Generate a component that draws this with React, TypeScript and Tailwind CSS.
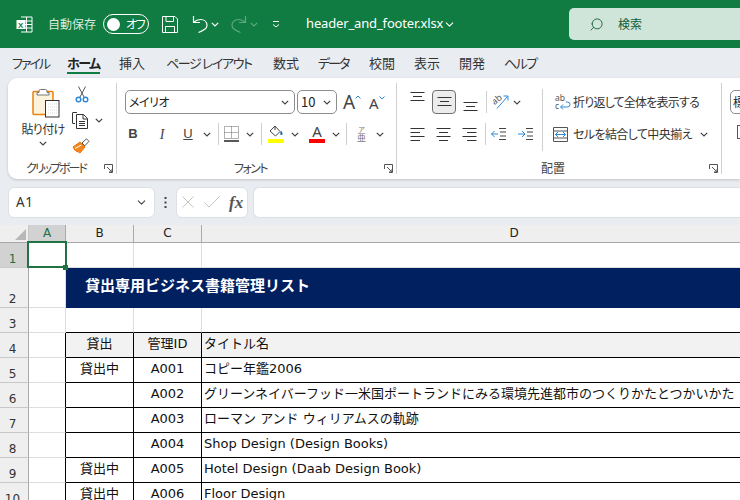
import type { ReactNode } from 'react'
import { ChevronDown, Search } from 'lucide-react'

const uiFont = "[font-family:'Noto_Sans_CJK_JP','Noto_Sans',sans-serif] [font-feature-settings:'palt']"

function Chev({ className = 'text-[#444]' }: { className?: string }) {
  return (
    <svg width="8" height="5" viewBox="0 0 8 5" className={className}>
      <path d="M0.8 0.8 4 4 7.2 0.8" fill="none" stroke="currentColor" strokeWidth="1.2" />
    </svg>
  )
}

function Launcher() {
  return (
    <svg width="9" height="9" viewBox="0 0 9 9" className="text-[#555]">
      <path d="M0.5 5V0.5H8.5V8.5H5M3 3 8 8M8 5V8H5" fill="none" stroke="currentColor" />
    </svg>
  )
}

function Sep({ className = 'h-[22px]' }: { className?: string }) {
  return <div className={`w-px flex-none bg-[#cfcfcf] ${className}`} />
}

function AlignLines({ kind }: { kind: 'left' | 'center' | 'right' }) {
  const rows = [1.5, 5.5, 9.5, 13.5]
  const short = kind === 'left' ? 'M0.5 Y H10' : kind === 'center' ? 'M3 Y H12' : 'M5 Y H14.5'
  return (
    <svg width="15" height="15" viewBox="0 0 15 15" className="flex-none text-[#333]">
      {rows.map((y, i) => (
        <path key={y} d={i % 2 ? short.replace('Y', String(y)) : `M0.5 ${y}H14.5`} stroke="currentColor" fill="none" />
      ))}
    </svg>
  )
}

function VAlign({ rows }: { rows: number[] }) {
  return (
    <svg width="15" height="16" viewBox="0 0 15 16" className="flex-none text-[#333]">
      {rows.map((y, i) => (
        <path key={y} d={i === 1 ? `M3 ${y}H12` : `M0.5 ${y}H14.5`} stroke="currentColor" fill="none" />
      ))}
    </svg>
  )
}

function RibbonGroup({ width, label, labelClass = '', children }: { width: string; label: string; labelClass?: string; children: ReactNode }) {
  return (
    <div className={`${width} my-[5px] flex flex-none flex-col border-r border-[#d0d0d0]`}>
      <div className="min-h-0 flex-1">{children}</div>
      <div className="-mb-[2px] flex h-[16px] items-center">
        <div className={`flex-1 text-center text-[12px] leading-none text-[#444] ${uiFont} ${labelClass}`}>{label}</div>
        <div className="flex w-[12px] flex-none justify-start"><Launcher /></div>
      </div>
    </div>
  )
}

function Clipboard() {
  return (
    <div className="flex">
      <div className="flex w-[58px] flex-none flex-col items-center pl-[12px] pt-[5px]">
        <svg width="28" height="30" viewBox="0 0 28 30" className="ml-[5px] flex-none">
          <rect x="1" y="3.5" width="20" height="23" rx="1" fill="#fdf3dd" stroke="#e8820c" strokeWidth="1.5" />
          <path d="M7 4.5V3a1.5 1.5 0 0 1 1.5-1.5h5A1.5 1.5 0 0 1 15 3v1.5h2v2.5H5V4.5z" fill="#fff" stroke="#777" />
          <rect x="13.5" y="12.5" width="13.5" height="16.5" fill="#fff" stroke="#333" />
          <path d="M16 16h9M16 19h9M16 22h9M16 25h9" stroke="#ddd" strokeDasharray="1 1" />
        </svg>
        <div className={`mt-[3px] whitespace-nowrap text-[12px] leading-[16px] tracking-[-0.7px] text-[#333] ${uiFont}`}>貼り付け</div>
        <div className="mt-[4px] flex justify-center"><Chev /></div>
      </div>
      <div className="flex flex-col pl-[6px] pt-[3px]">
        <svg width="14" height="17" viewBox="0 0 14 17" className="ml-[3px]">
          <path d="M3.5 0.5 9 11M10.500 0.5 5 11" stroke="#555" fill="none" />
          <circle cx="3.5" cy="13.5" r="2.3" fill="none" stroke="#2b88d8" strokeWidth="1.4" />
          <circle cx="10.5" cy="13.5" r="2.3" fill="none" stroke="#2b88d8" strokeWidth="1.4" />
        </svg>
        <div className="mt-[8px] flex items-center">
          <svg width="17" height="18" viewBox="0 0 17 18">
            <path d="M5 1.5H1a.5.5 0 0 0-.5.5v10a.5.5 0 0 0 .5.5h2" fill="none" stroke="#333" />
            <path d="M4.5 3.5h7l4 4v10h-11zM11 3.5v4.500h4.500M7 10.500h6M7 12.500h6M7 14.500h6" fill="#fff" stroke="#333" />
          </svg>
          <span className="ml-[6px]"><Chev /></span>
        </div>
        <svg width="18" height="16" viewBox="0 0 18 16" className="mt-[9px]">
          <path d="M1 9 8 4l5 5-5 6-2-1.5-1 .5-1-2-1 .5z" fill="#f08a1d" stroke="#e8700c" />
          <path d="M3 10.5 9.5 7" stroke="#fff" />
          <path d="M10 5 14.5 0.8 17 3.3l-4.2 4.5z" fill="#fff" stroke="#555" />
        </svg>
      </div>
    </div>
  )
}

function FontGroup() {
  return (
    <div className="flex flex-col pt-[7px]">
      <div className="flex h-[24px] items-center pl-[8px]">
        <div className="flex h-[24px] w-[170px] flex-none items-center justify-between rounded-[5px] border border-[#8d8d8d] pl-[3px] pr-[5px]">
          <span className={`text-[12px] tracking-[-0.5px] text-[#222] ${uiFont}`}>メイリオ</span>
          <Chev />
        </div>
        <div className="ml-[2px] flex h-[24px] w-[40px] flex-none items-center justify-between rounded-[5px] border border-[#8d8d8d] pl-[3px] pr-[5px]">
          <span className={`text-[13px] text-[#222] ${uiFont}`}>10</span>
          <Chev />
        </div>
        <div className="ml-[6px] flex w-[22px] flex-none items-start">
          <span className="font-['Noto_Sans'] text-[19px] leading-none text-[#444]">A</span>
          <svg width="6" height="4" viewBox="0 0 6 4" className="mt-[2px]"><path d="M0.5 3.5 3 1l2.5 2.5" stroke="#2b88d8" fill="none" /></svg>
        </div>
        <div className="ml-[4px] flex w-[20px] flex-none items-start pt-[3px]">
          <span className="font-['Noto_Sans'] text-[15px] leading-none text-[#444]">A</span>
          <svg width="6" height="4" viewBox="0 0 6 4"><path d="M0.5 0.5 3 3l2.5-2.5" stroke="#2b88d8" fill="none" /></svg>
        </div>
      </div>
      <div className="mt-[8px] flex h-[24px] items-center pl-[2px]">
        <span className="w-[28px] flex-none text-center font-['Liberation_Sans'] text-[13px] font-bold text-[#444]">B</span>
        <span className="w-[30px] flex-none text-center font-['Liberation_Serif'] text-[14px] italic text-[#444]">I</span>
        <span className="w-[22px] flex-none text-center font-['Liberation_Sans'] text-[13px] text-[#444] underline">U</span>
        <span className="flex w-[16px] flex-none justify-center"><Chev /></span>
        <span className="w-[3px] flex-none" />
        <Sep />
        <svg width="15" height="16" viewBox="0 0 15 16" className="ml-[5px] flex-none">
          <path d="M0.5 0.5H14.5V12.5H0.5zM7.5 0.5V12.5M0.5 6.5H14.5" fill="none" stroke="#666" strokeDasharray="1 1" />
          <path d="M0 15H15" stroke="#222" strokeWidth="1.4" />
        </svg>
        <span className="flex w-[22px] flex-none justify-center"><Chev /></span>
        <Sep />
        <div className="ml-[6px] flex w-[16px] flex-none flex-col">
          <svg width="16" height="13" viewBox="0 0 16 13">
            <path d="M7 1 12 6.5 7.5 11 2 6z" fill="#fff" stroke="#444" />
            <path d="M7 1V5" stroke="#444" />
            <path d="M13 5.500c1 1.500 1.600 2.400 1.600 3.200a1.200 1.200 0 0 1-2.400 0c0-.8.400-1.700.8-3.200z" fill="#1d6fb8" />
          </svg>
          <div className="mt-[1px] h-[4px] bg-[#ffff00]" />
        </div>
        <span className="flex w-[21px] flex-none justify-center"><Chev /></span>
        <div className="ml-[4px] flex w-[16px] flex-none flex-col items-center">
          <span className="font-['Noto_Sans'] text-[15px] leading-[13px] text-[#444]">A</span>
          <div className="mt-[1px] h-[4px] w-full bg-[#ff0000]" />
        </div>
        <span className="flex w-[21px] flex-none justify-center"><Chev /></span>
        <Sep />
        <svg width="9" height="18" viewBox="0 0 9 18" className="ml-[10px] flex-none">
          <text x="1" y="7" fontSize="7" fill="#777" fontFamily="Noto Sans CJK JP">ア</text>
          <text x="0" y="16" fontSize="9" fill="#777" fontFamily="Noto Sans CJK JP">亜</text>
        </svg>
        <span className="flex w-[28px] flex-none justify-center"><Chev /></span>
      </div>
    </div>
  )
}

function AlignGroup() {
  return (
    <div className="flex pt-[7px]">
      <div className="flex w-[145px] flex-none flex-col">
        <div className="flex h-[24px] items-center pl-[13px]">
          <div className="-mt-[4px]"><VAlign rows={[0.5, 4.5, 8.5]} /></div>
          <div className="ml-[7px] flex h-[24px] w-[24px] flex-none items-center justify-center rounded-[4px] border border-[#707070] bg-[#ececec]">
            <VAlign rows={[3.5, 7.5, 11.5]} />
          </div>
          <div className="ml-[7px] mt-[6px]"><VAlign rows={[5.5, 9.5, 13.5]} /></div>
          <span className="w-[8px] flex-none" />
          <Sep />
          <svg width="16" height="16" viewBox="0 0 16 16" className="ml-[6px] flex-none">
            <text x="0" y="9" fontSize="9" fill="#555" fontFamily="Noto Sans" transform="rotate(-40 4 8)">ab</text>
            <path d="M4 14.500 14.500 2.500M10.500 2H15V6.500" fill="none" stroke="#2b88d8" />
          </svg>
          <span className="ml-[4px]"><Chev /></span>
        </div>
        <div className="mt-[8px] flex h-[24px] items-center pl-[13px]">
          <AlignLines kind="left" />
          <span className="ml-[11px]"><AlignLines kind="center" /></span>
          <span className="ml-[11px]"><AlignLines kind="right" /></span>
          <span className="w-[8px] flex-none" />
          <Sep />
          <svg width="15" height="12" viewBox="0 0 15 12" className="ml-[5px] flex-none">
            <path d="M8 0.5H15M9 4H15M9 8H15M8 11.5H15" stroke="#444" fill="none" />
            <path d="M0.5 6H7M3.5 3 0.5 6l3 3" stroke="#2b88d8" fill="none" />
          </svg>
          <svg width="15" height="12" viewBox="0 0 15 12" className="ml-[12px] flex-none">
            <path d="M8 0.5H15M9 4H15M9 8H15M8 11.5H15" stroke="#444" fill="none" />
            <path d="M0 6H7M4 3l3 3-3 3" stroke="#2b88d8" fill="none" />
          </svg>
        </div>
      </div>
      <Sep className="mt-[-1px] h-[62px]" />
      <div className="flex flex-1 flex-col">
        <div className={`flex h-[24px] items-center pl-[12px] text-[12px] text-[#333] ${uiFont}`}>
          <svg width="16" height="16" viewBox="0 0 16 16" className="flex-none">
            <text x="0" y="7" fontSize="8.5" fill="#555" fontFamily="Noto Sans">ab</text>
            <text x="0" y="15" fontSize="8.5" fill="#555" fontFamily="Noto Sans">c</text>
            <path d="M6 13h6.500a2.500 2.500 0 0 0 0-5H11M8 10.500 5.500 13 8 15.500" fill="none" stroke="#2b88d8" />
          </svg>
          <span className="ml-[2px] tracking-[-0.8px]">折り返して全体を表示する</span>
        </div>
        <div className={`mt-[8px] flex h-[24px] items-center pl-[10px] text-[12px] text-[#333] ${uiFont}`}>
          <svg width="15" height="15" viewBox="0 0 15 15" className="flex-none">
            <path d="M0.5 0.5H14.500V14.500H0.5zM0.5 4H14.500M0.5 11H14.500" fill="none" stroke="#555" />
            <path d="M2.500 7.500H12.500M5 5 2.500 7.500 5 10M10 5l2.500 2.500L10 10" fill="none" stroke="#2b88d8" />
          </svg>
          <span className="ml-[5px] w-[127px] flex-none tracking-[-0.6px]">セルを結合して中央揃え</span>
          <Chev />
        </div>
      </div>
    </div>
  )
}

function TitleBar() {
  return (
    <div className="flex h-[48px] flex-none items-center overflow-hidden bg-[#107c41] pl-[16px] text-white">
      <svg width="17" height="17" viewBox="0 0 17 17" className="flex-none">
        <path d="M5 1H16V16H5M10.500 1V16M5 5H16M5 8.500H16M5 12H16" fill="none" stroke="#fff" />
        <rect x="0.5" y="4" width="9" height="9" fill="#fff" />
        <text x="2" y="11.5" fontSize="8" fontWeight="700" fill="#107c41" fontFamily="Liberation Sans">X</text>
      </svg>
      <span className={`ml-[15px] w-[48px] flex-none text-[12px] text-[#d8eadf] ${uiFont}`}>自動保存</span>
      <div className="ml-[7px] flex h-[20px] w-[46px] flex-none items-center rounded-full border border-white pl-[3px]">
        <div className="h-[13px] w-[13px] flex-none rounded-full bg-white" />
        <span className={`ml-[6px] text-[12px] leading-none tracking-[-1.5px] ${uiFont}`}>オフ</span>
      </div>
      <svg width="16" height="17" viewBox="0 0 16 17" className="ml-[13px] flex-none">
        <path d="M0.5 0.5H13L15.500 3V16.500H0.5zM4 0.5V5.500H11.500V0.5M3.500 16.500V10.500H12.500V16.500" fill="none" stroke="#fff" />
      </svg>
      <svg width="16" height="18" viewBox="0 0 16 18" className="ml-[14px] flex-none">
        <path d="M1.500 1V7.500H8M1.500 7.500C4 5 6 4.500 8.500 4.500C12.500 4.500 15 7 15 10.500C15 13 13 15 6.500 17.500" fill="none" stroke="#fff" strokeWidth="1.2" />
      </svg>
      <span className="ml-[3px]"><Chev className="text-white" /></span>
      <svg width="16" height="18" viewBox="0 0 16 18" className="ml-[12px] flex-none">
        <path d="M14.500 1V7.500H8M14.500 7.500C12 5 10 4.500 7.500 4.500C3.500 4.500 1 7 1 10.500C1 13 3 15 9.500 17.500" fill="none" stroke="#5ca883" strokeWidth="1.2" />
      </svg>
      <span className="ml-[3px]"><Chev className="text-[#5ca883]" /></span>
      <svg width="8" height="8" viewBox="0 0 8 8" className="ml-[14px] flex-none">
        <path d="M1 1.500H7M1 4.500 4 7l3-2.500" fill="none" stroke="#fff" />
      </svg>
      <span className="ml-[26px] w-[135px] flex-none whitespace-nowrap font-['Noto_Sans'] text-[13px] tracking-[-0.15px]">header_and_footer.xlsx</span>
      <ChevronDown size={13} className="ml-[2px] flex-none" />
      <div className="ml-[113px] flex h-[32px] flex-1 items-center rounded-l-[5px] bg-[#cfe5d9] pl-[20px]">
        <Search size={15} strokeWidth={1.4} className="-scale-x-100 flex-none text-[#145c36]" />
        <span className={`ml-[14px] text-[12px] text-[#145c36] ${uiFont}`}>検索</span>
      </div>
    </div>
  )
}

const tabs = [
  { label: 'ファイル', cls: 'w-[37px] tracking-[-2px]' },
  { label: 'ホーム', cls: 'ml-[18px] w-[33px] tracking-[-1.5px] font-bold text-[#222]', active: true },
  { label: '挿入', cls: 'ml-[19px] w-[26px]' },
  { label: 'ページ レイアウト', cls: 'ml-[21px] w-[86px] tracking-[-1.4px]' },
  { label: '数式', cls: 'ml-[21px] w-[26px]' },
  { label: 'データ', cls: 'ml-[19px] w-[32px] tracking-[-2px]' },
  { label: '校閲', cls: 'ml-[19px] w-[26px]' },
  { label: '表示', cls: 'ml-[19px] w-[26px]' },
  { label: '開発', cls: 'ml-[19px] w-[26px]' },
  { label: 'ヘルプ', cls: 'ml-[19px] w-[32px] tracking-[-1.5px]' },
]

function Tabs() {
  return (
    <div className={`flex h-[30px] flex-none items-center pl-[12px] text-[13px] text-[#333] ${uiFont}`}>
      {tabs.map(t => (
        <div key={t.label} className={`${t.cls} relative flex h-full flex-none items-center whitespace-nowrap`}>
          {t.label}
          {t.active && <div className="absolute inset-x-0 bottom-[4px] h-[2px] bg-[#107c41]" />}
        </div>
      ))}
    </div>
  )
}

function Ribbon() {
  return (
    <div className="ml-[8px] flex h-[101px] flex-none overflow-hidden rounded-l-[9px] bg-white shadow-[0_1px_3px_rgba(0,0,0,0.18)]">
      <RibbonGroup width="w-[109px]" label="クリップボード" labelClass="tracking-[-2px]"><Clipboard /></RibbonGroup>
      <RibbonGroup width="w-[280px]" label="フォント" labelClass="tracking-[-1.5px]"><FontGroup /></RibbonGroup>
      <RibbonGroup width="w-[325px]" label="配置"><AlignGroup /></RibbonGroup>
      <div className="flex-1 overflow-hidden pl-[8px] pt-[12px]">
        <div className={`h-[24px] w-[30px] overflow-hidden rounded-l-[5px] border border-[#8d8d8d] pl-[2px] text-[12px] leading-[22px] text-[#222] ${uiFont}`}>標準</div>
        <div className="ml-[7px] mt-[11px] h-[14px] w-[12px] border border-[#555]" />
      </div>
    </div>
  )
}

function FormulaBar() {
  return (
    <div className="flex h-[46px] flex-none items-center pl-[8px]">
      <div className="flex h-[31px] w-[147px] flex-none items-center justify-between rounded-[6px] border border-[#dcdfe4] bg-white pl-[7px] pr-[6px]">
        <span className="font-['Noto_Sans'] text-[13.5px] tracking-[0.5px] text-[#333]">A1</span>
        <ChevronDown size={13} className="text-[#444]" />
      </div>
      <svg width="3" height="11" viewBox="0 0 3 11" className="ml-[9px] flex-none">
        <path d="M0.5 0h2v2h-2zM0.5 4.500h2v2h-2zM0.5 9h2v2h-2z" fill="#444" />
      </svg>
      <div className="ml-[9px] flex h-[31px] w-[72px] flex-none items-center rounded-[6px] border border-[#dcdfe4] bg-white pl-[5px]">
        <svg width="12" height="12" viewBox="0 0 12 12" className="flex-none"><path d="M0.5 0.500 11.500 11.500M11.500 0.500 0.500 11.500" stroke="#c4c4c4" /></svg>
        <svg width="16" height="12" viewBox="0 0 16 12" className="ml-[10px] flex-none"><path d="M0.500 6.500 5 11 15.500 0.500" fill="none" stroke="#c4c4c4" /></svg>
        <span className="ml-[9px] font-['Liberation_Serif'] text-[17px] font-bold italic leading-none text-[#555]">fx</span>
      </div>
      <div className="ml-[5px] h-[31px] flex-1 rounded-l-[6px] border border-r-0 border-[#dcdfe4] bg-white" />
    </div>
  )
}

function ColumnHeader() {
  return (
    <div className="flex h-[18px] flex-none border-b border-[#a8a8a8] bg-[#efefef] font-['DejaVu_Sans'] text-[12px] leading-[17px] text-[#222]">
      <div className="flex w-[29px] flex-none items-end justify-end border-r border-[#c8c8c8] pb-[2px] pr-[2px]">
        <div className="h-0 w-0 border-b-[11px] border-l-[11px] border-b-[#b8b8b8] border-l-transparent" />
      </div>
      <div className="w-[37px] flex-none border-r border-[#aaa] bg-[#d2d2d2] text-center text-[#1e6f43]">A</div>
      <div className="w-[68px] flex-none border-r border-[#aaa] text-center">B</div>
      <div className="w-[68px] flex-none border-r border-[#aaa] text-center">C</div>
      <div className="w-[624px] flex-none text-center">D</div>
    </div>
  )
}

type RowProps = {
  no: number
  height: string
  selected?: boolean
  title?: string
  table?: boolean
  closesTable?: boolean
  header?: boolean
  cells?: [string, string, string]
}

function Row({ no, height, selected, title, table, closesTable, header, cells }: RowProps) {
  const line = table || closesTable ? 'border-b-black' : 'border-b-[#dedede]'
  const vertical = table ? 'border-r-black' : 'border-r-[#dedede]'
  const bg = header ? 'bg-[#f2f2f2]' : ''
  const centered = `${line} ${vertical} ${bg} flex w-[68px] flex-none items-center justify-center border-b border-r pb-[3px]`
  return (
    <div className={`flex ${height} flex-none`}>
      <div className={`flex w-[29px] flex-none items-end justify-center border-b border-r border-b-[#c8c8c8] border-r-[#a8a8a8] pr-[3px] text-[12px] leading-[16px] ${selected ? 'bg-[#d2d2d2] text-[#1e6f43]' : 'bg-[#efefef] text-[#333]'}`}>
        {no}
      </div>
      <div className={`relative w-[37px] flex-none border-b border-r border-b-[#dedede] ${table ? 'border-r-black' : 'border-r-[#dedede]'}`}>
        {selected && (
          <div className="absolute -left-[2px] -top-[2px] bottom-[-1px] right-[-2px] z-10 border-2 border-[#217346]">
            <div className="absolute -bottom-[4px] -right-[3px] h-[5px] w-[5px] bg-[#217346]" />
          </div>
        )}
      </div>
      {title ? (
        <div className="flex flex-1 items-center bg-[#002060] pb-[4px] pl-[19px] text-[15px] font-bold text-white">{title}</div>
      ) : (
        <>
          <div className={centered}>{cells?.[0]}</div>
          <div className={centered}>{cells?.[1]}</div>
          <div className={`${line} ${bg} flex flex-1 items-center whitespace-nowrap border-b pb-[3px] pl-[2px]`}>{cells?.[2]}</div>
        </>
      )}
    </div>
  )
}

const books: [string, string, string][] = [
  ['貸出中', 'A001', 'コピー年鑑2006'],
  ['', 'A002', 'グリーンネイバーフッド一米国ポートランドにみる環境先進都市のつくりかたとつかいかた'],
  ['', 'A003', 'ローマン アンド ウィリアムスの軌跡'],
  ['', 'A004', 'Shop Design (Design Books)'],
  ['貸出中', 'A005', 'Hotel Design (Daab Design Book)'],
  ['貸出中', 'A006', 'Floor Design'],
]

export default function App() {
  return (
    <div className="flex h-[500px] w-[740px] flex-col overflow-hidden bg-[#e9ecf1]">
      <TitleBar />
      <Tabs />
      <Ribbon />
      <FormulaBar />
      <ColumnHeader />
      <div className="flex-1 bg-white font-['DejaVu_Sans','Noto_Sans_CJK_JP',sans-serif] text-[13px] text-[#111]">
        <Row no={1} height="h-[25px]" selected />
        <Row no={2} height="h-[40px]" title="貸出専用ビジネス書籍管理リスト" />
        <Row no={3} height="h-[25px]" closesTable />
        <Row no={4} height="h-[25px]" table header cells={['貸出', '管理ID', 'タイトル名']} />
        {books.map((b, i) => (
          <Row key={b[1]} no={i + 5} height="h-[25px]" table cells={b} />
        ))}
      </div>
    </div>
  )
}
